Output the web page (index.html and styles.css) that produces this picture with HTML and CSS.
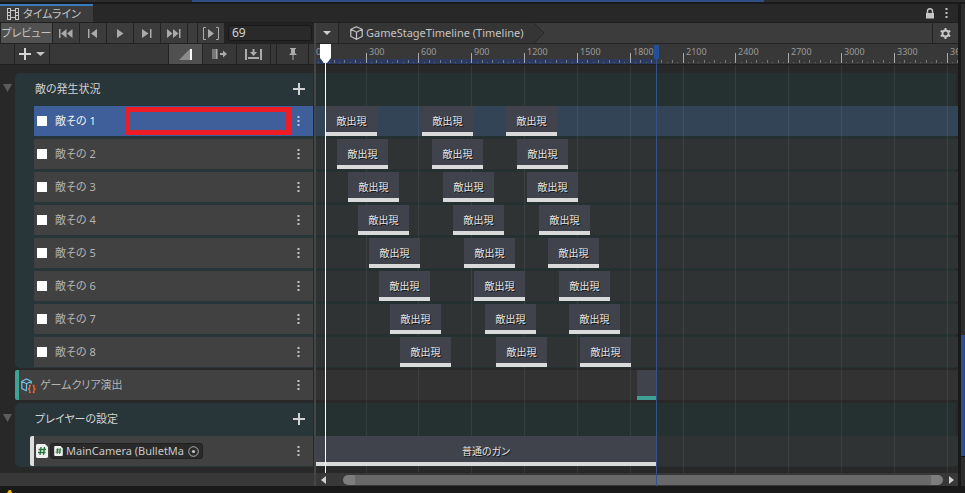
FILE: index.html
```html
<!DOCTYPE html>
<html lang="ja">
<head>
<meta charset="utf-8">
<title>タイムライン</title>
<link rel="stylesheet" href="styles.css">
</head>
<body>
<div class="above"><span class="above-fill"></span></div>
<div class="workspace">
  <main class="window">
    <header class="tabbar">
      <button class="tab" type="button">
        <svg width="12" height="12" viewBox="0 0 12 12" fill="none" stroke="#c8c8c8"><path d="M.5 .5v11M3.500 .5v11M8.500 .5v11M11.500 .5v11M0 .5h4M8 .5h4M0 4.500h4M8 4.500h4M0 7.500h4M8 7.500h4M0 11.500h4M8 11.500h4M3 2.500h6M3 9.500h6"/></svg>
        タイムライン
      </button>
      <div class="tab-tools">
        <button type="button" aria-label="ロック"><svg width="10" height="11" viewBox="0 0 10 11"><path d="M2.500 5V3a2.500 2.300 0 0 1 5 0v2" fill="none" stroke="#c4c4c4" stroke-width="1.500"/><path d="M1 5h8v5.500H1z" fill="#c4c4c4"/></svg></button>
        <button type="button" aria-label="メニュー"><svg class="dots" width="3" height="11" viewBox="0 0 3 11"><path d="M.5 0h2v2h-2zM.5 4h2v2h-2zM.5 8h2v2h-2z"/></svg></button>
      </div>
    </header>
    <div class="panes">
      <section class="left">
        <div class="toolbar">
          <button class="preview" type="button">プレビュー</button>
          <button class="play" type="button" aria-label="先頭"><svg width="14" height="9" viewBox="0 0 14 9"><path d="M0 0h1.500v9H0zM7.500 0v9L2 4.500zM13.500 0v9L8 4.500z"/></svg></button>
          <button class="play" type="button" aria-label="前へ"><svg width="10" height="9" viewBox="0 0 10 9"><path d="M0 0h1.500v9H0zM9 0v9L3 4.500z"/></svg></button>
          <button class="play" type="button" aria-label="再生"><svg width="8" height="9" viewBox="0 0 8 9"><path d="M1 0v9l6.500-4.500z"/></svg></button>
          <button class="play" type="button" aria-label="次へ"><svg width="10" height="9" viewBox="0 0 10 9"><path d="M8 0h1.500v9H8zM0 0v9l6.500-4.500z"/></svg></button>
          <button class="play" type="button" aria-label="末尾"><svg width="14" height="9" viewBox="0 0 14 9"><path d="M12 0h1.500v9H12zM0 0v9l5.500-4.500zM6 0v9l5.500-4.500z"/></svg></button>
          <span class="spacer"></span>
          <button class="play" type="button" aria-label="範囲再生"><svg width="16" height="13" viewBox="0 0 16 13"><path d="M5 2v9l6-4.500z"/><path d="M3 .5H.5v12H3M13 .5h2.500v12H13" fill="none" stroke="#aaa"/></svg></button>
          <input class="frame" type="text" value="69" aria-label="フレーム">
        </div>
        <div class="toolbar second">
          <span class="lead"></span>
          <button class="add" type="button" aria-label="追加"><svg width="26" height="12" viewBox="0 0 26 12"><path d="M0 5h5V0h2v5h5v2H7v5H5V7H0z" fill="#d4d4d4"/><path d="M17 4h9l-4.500 4z" fill="#c4c4c4"/></svg></button>
          <span class="fill"></span>
          <button class="mode on" type="button" aria-label="ミックス"><svg width="14" height="11" viewBox="0 0 14 11"><path d="M0 11L11 0v11z" fill="#8b8b8b"/><path d="M11 0h2v11h-2z" fill="#fff"/></svg></button>
          <button class="mode" type="button" aria-label="リップル"><svg width="15" height="10" viewBox="0 0 15 10"><path d="M0 0h4v10H0z" fill="#777"/><path d="M4 0h1.500v10H4zM8 4h3V1.500L15 5l-4 3.500V6H8z" fill="#aaa"/></svg></button>
          <button class="mode" type="button" aria-label="置換"><svg width="17" height="11" viewBox="0 0 17 11"><path d="M0 0h2v11H0zM15 0h2v11h-2zM7.500 0h2v3H12L8.500 7 5 3h2.500zM3 8h11v2H3z" fill="#aaa"/></svg></button>
          <span class="nub"></span>
          <button class="mode pin" type="button" aria-label="マーカー"><svg width="8" height="12" viewBox="0 0 8 12"><path d="M1 0h6v1H6v4l2 2H0l2-2V1H1zM3.500 7h1v5h-1z" fill="#aaa"/></svg></button>
          <span class="tail"></span>
        </div>
        <div class="tracks heads">
          <section class="group">
            <div class="group-head"><button class="fold" type="button" aria-label="折りたたむ"><svg width="9" height="8" viewBox="0 0 9 8"><path d="M0 0h9L4.500 8z"/></svg></button><h2>敵の発生状況</h2><button class="plus" type="button" aria-label="トラック追加"></button></div>
            <div id="enemies" class="rows"></div>
          </section>
          <div class="track timeline-track">
            <svg width="15" height="15" viewBox="0 0 15 15" fill="none"><path d="M6 13L.8 10.500V3.300L5.500 1l4.700 2.300v2.500M.8 3.300l4.700 2.400 4.700-2.400M5.500 5.700V12" stroke="#6fc3ea" stroke-width="1.200"/><path d="M9.800 7.500H8.600v2.500L7.500 11l1.100 1v2.500h1.200M11.700 7.500h1.200v2.500l1.100 1-1.100 1v2.500h-1.200" stroke="#ff5f2e" stroke-width="1.300"/></svg>
            <span class="name">ゲームクリア演出</span>
            <button class="more" type="button" aria-label="メニュー"><svg class="dots" width="3" height="11" viewBox="0 0 3 11"><path d="M.5 0h2v2h-2zM.5 4h2v2h-2zM.5 8h2v2h-2z"/></svg></button>
          </div>
          <section class="group">
            <div class="group-head"><button class="fold" type="button" aria-label="折りたたむ"><svg width="9" height="8" viewBox="0 0 9 8"><path d="M0 0h9L4.500 8z"/></svg></button><h2>プレイヤーの設定</h2><button class="plus" type="button" aria-label="トラック追加"></button></div>
            <div class="track camera">
              <svg width="12" height="14" viewBox="0 0 12 14"><path d="M1 0h8l3 3v10l-1 1H1l-1-1V1z" fill="#f0f0f0"/><path d="M5 3L4 11M8.500 3l-1 8M2.500 5.500h7.500M2 8.500h7.500" stroke="#27713b" stroke-width="1.300"/></svg>
              <button class="binding" type="button">
                <svg width="9" height="10" viewBox="0 0 12 14"><path d="M1 0h8l3 3v10l-1 1H1l-1-1V1z" fill="#f0f0f0"/><path d="M5 3L4 11M8.500 3l-1 8M2.500 5.500h7.500M2 8.500h7.500" stroke="#27713b" stroke-width="1.400"/></svg>
                <span class="object">MainCamera (BulletMa</span>
                <svg width="11" height="11" viewBox="0 0 11 11"><circle cx="5.500" cy="5.500" r="4.800" fill="none" stroke="#b0b0b0"/><circle cx="5.500" cy="5.500" r="1.600" fill="#c4c4c4"/></svg>
              </button>
              <button class="more" type="button" aria-label="メニュー"><svg class="dots" width="3" height="11" viewBox="0 0 3 11"><path d="M.5 0h2v2h-2zM.5 4h2v2h-2zM.5 8h2v2h-2z"/></svg></button>
            </div>
          </section>
        </div>
        <div class="footer"></div>
      </section>
      <section class="right">
        <div class="toolbar crumbs">
          <button class="drop" type="button" aria-label="選択"><svg width="8" height="4" viewBox="0 0 8 4"><path d="M0 0h8L4 4z" fill="#d0d0d0"/></svg></button>
          <button class="crumb" type="button">
            <svg width="13" height="14" viewBox="0 0 13 14" fill="none" stroke="#c4c4c4" stroke-width="1.200"><path d="M6.500 .7l5.700 2.600v7.200l-5.700 2.800-5.700-2.800V3.300zM.8 3.300l5.700 2.900 5.700-2.900M6.500 6.200v7"/></svg>
            GameStageTimeline (Timeline)
          </button>
          <svg class="chevron" width="11" height="20" viewBox="0 0 11 20"><path d="M0 0l10 10L0 20z" fill="#353535"/><path d="M0 0l10 10L0 20" fill="none" stroke="#272727"/></svg>
          <button class="gear" type="button" aria-label="設定"><svg width="11" height="11" viewBox="0 0 12 12"><circle cx="6" cy="6" r="3.300" fill="none" stroke="#c8c8c8" stroke-width="2"/><path d="M6 0v2.500M6 9.500V12M.8 3l2.200 1.300M9 7.700L11.200 9M.8 9L3 7.700M9 4.300L11.200 3" stroke="#c8c8c8" stroke-width="2.200"/></svg></button>
        </div>
        <div class="ruler" id="ruler"></div>
        <div class="tracks lanes">
          <section class="group">
            <div class="group-head"></div>
            <div id="enemy-lanes" class="rows"></div>
          </section>
          <div class="lane plain" data-clips="321,19" data-kind="clear"></div>
          <section class="group">
            <div class="group-head"></div>
            <div class="lane" data-clips="0,340" data-label="普通のガン"></div>
          </section>
          <svg class="grid" id="grid" width="100%" height="100%"></svg>
        </div>
        <div class="footer scroll">
          <svg width="5" height="8" viewBox="0 0 5 8"><path d="M5 0v8L0 4z"/></svg>
          <div class="thumb"></div>
          <svg width="5" height="8" viewBox="0 0 5 8"><path d="M0 0v8l5-4z"/></svg>
        </div>
        <span class="end-line"></span><span class="end-head"></span>
        <span class="playline"></span>
        <svg class="playhead" width="11" height="20" viewBox="0 0 11 20"><path d="M0 0h11v14l-4 5H4l-4-5z" fill="#fff"/></svg>
      </section>
    </div>
  </main>
  <aside class="neighbour"><span></span></aside>
</div>
<div class="below"><svg width="5" height="3" viewBox="0 0 5 3"><path d="M2 0h2l1 3H0z" fill="#f5b400"/></svg></div>
<script src="timeline.js"></script>
</body>
</html>
```
FILE: styles.css
```css
* { box-sizing: border-box; }

body {
  margin: 0;
  min-height: 100vh;
  display: flex;
  flex-direction: column;
  background: #191919;
  color: #c4c4c4;
  font-family: "Noto Sans", "Noto Sans CJK JP", sans-serif;
  font-size: 11px;
  line-height: 16px;
  font-feature-settings: "palt";
  overflow: hidden;
}

button {
  font: inherit;
  font-feature-settings: inherit;
  color: inherit;
  background: none;
  border: 0;
  padding: 0;
  display: flex;
  align-items: center;
  justify-content: center;
  white-space: nowrap;
}

svg { display: block; flex: none; }
.dots { fill: #c4c4c4; }

.above { display: flex; height: 4px; background: #2d2d2d; border-bottom: 2px solid #191919; padding-left: 192px; }
.above-fill { width: 74%; background: #2f4f84; }

.workspace { display: flex; }
.window { flex: 1; min-width: 0; background: #282828; }
.neighbour { width: 7px; background: #2d2d2d; border-left: 3px solid #191919; display: flex; align-items: flex-end; padding-bottom: 29px; }
.neighbour span { width: 100%; height: 122px; background: #2c5087; border-bottom: 1px solid #111; }
.below { height: 6px; padding: 4px 0 0 7px; }

.tabbar { display: flex; justify-content: space-between; height: 19px; border-bottom: 1px solid #1f1f1f; }
.tab { width: 93px; justify-content: flex-start; gap: 4px; padding-left: 7px; background: #3c3c3c; border-top: 2px solid #3a79bb; }
.tab-tools { display: flex; gap: 10px; padding-right: 10px; }

.panes { display: flex; }
.left { width: 316px; border-right: 2px solid #454545; }
.right { position: relative; flex: 1; min-width: 0; overflow: hidden; }

.toolbar { display: flex; gap: 1px; height: 21px; background: #232323; border-bottom: 1px solid #232323; }
.toolbar > * { background: #3c3c3c; }
.toolbar svg { fill: #aaa; }
.toolbar .preview { width: 52px; background: #515151; border-left: 1px solid #232323; }
.play { width: 26px; }
.spacer { width: 9px; }
.toolbar .frame {
  flex: 1;
  min-width: 0;
  height: 16px;
  margin: 2px 2px 2px 3px;
  padding: 0 3px;
  background: #2a2a2a;
  border: 1px solid #181818;
  border-radius: 3px;
  color: #d2d2d2;
  font: inherit;
  font-size: 12px;
}
.toolbar.second { border-bottom: 0; height: 20px; }
.toolbar.second > * { background: #383838; }
.lead { width: 14px; }
.toolbar .add { width: 34px; }
.fill { flex: 1; }
.mode { width: 33px; }
.pin { width: 31px; }
.toolbar.second .on { background: #505050; }
.nub { width: 5px; }
.tail { width: 5px; }

.tracks { display: flex; flex-direction: column; gap: 3px; padding: 8px 0 7px; border-top: 1px solid #202020; background: #282828; }
.heads { padding-left: 15px; padding-right: 1px; }
.group { padding-bottom: 1px; margin-bottom: -1px; background: #283539; border-radius: 5px 0 0 5px; }
.group-head { display: flex; align-items: center; height: 33px; padding-bottom: 2px; }
.group-head h2 { flex: 1; margin: 0; font-size: 11px; font-weight: 400; color: #d2d2d2; }
.fold { width: 15px; margin: -2px 20px 0 -15px; }
.fold svg { fill: #5c5c5c; }
.plus {
  width: 12px;
  height: 12px;
  margin-right: 8px;
  background: linear-gradient(#d2d2d2, #d2d2d2) center / 12px 2px no-repeat, linear-gradient(#d2d2d2, #d2d2d2) center / 2px 12px no-repeat;
}
.rows { display: flex; flex-direction: column; gap: 3px; }
.heads .rows { padding-left: 19px; }
.track { position: relative; display: flex; align-items: center; height: 30px; background: #414141; color: #b4b4b4; }
.swatch { width: 10px; height: 10px; margin: 0 8px 0 3px; background: #fff; }
.name { flex: 1; }
.more { width: 9px; margin-right: 10px; height: 20px; }
.selected { background: #3e5f99; color: #f0f0f0; }
.callout { position: absolute; inset: 1px 22px 1px 91px; border: 5px solid #ee1c24; }
.timeline-track { border-left: 4px solid #3ea294; padding-left: 2px; gap: 4px; border-radius: 2px 0 0 2px; }
.camera { margin-left: 15px; border-left: 4px solid #ddd; padding-left: 2px; gap: 2px; border-radius: 2px 0 0 2px; justify-content: flex-start; }
.binding { width: 153px; height: 16px; padding: 0 3px; gap: 3px; background: #2a2a2a; border: 1px solid #202020; border-radius: 3px; color: #c8c8c8; }
.object { flex: 1; text-align: left; }
.camera .more { margin-left: auto; }

.footer { height: 13px; background: #383838; }

.toolbar.crumbs { background: #3c3c3c; border-bottom: 1px solid #232323; gap: 0; }
.toolbar.crumbs .drop { width: 23px; background: #3a3a3a; border-right: 1px solid #232323; }
.toolbar.crumbs .crumb { background: #353535; padding: 0 10px 0 11px; gap: 3px; }
.toolbar.crumbs .crumb svg { fill: none; }
.toolbar.crumbs .gear { width: 26px; margin-left: auto; border-left: 1px solid #232323; }

.ruler { position: relative; height: 20px; background: #383838; color: #9a9a9a; font-size: 9px; line-height: 14px; overflow: hidden; }
.ruler .range { position: absolute; left: 0; top: 15px; width: 340px; height: 5px; background: #2b3a5e; }
.ruler svg { position: absolute; left: 0; top: 0; }
.ruler span { position: absolute; top: 1px; }

.lanes { position: relative; }
.lanes .group { background: #253030; border-radius: 0; margin-right: 2px; }
.lanes .rows, .group > .lane { margin-right: -2px; }
.lane { position: relative; height: 30px; background: #2f3333; }
.lane.selected { background: #334456; }
.lane.plain { background: #323232; }
.clip {
  position: absolute;
  z-index: 1;
  top: 0;
  height: 30px;
  padding-top: 3px;
  background: #40434b;
  border-bottom: 4px solid #dadada;
  color: #e4e4e4;
  font-size: 10px;
  line-height: 24px;
  text-align: center;
  text-shadow: 1px 1px 0 #151515;
}
.clip.clear { border-color: #3ea294; }
.grid { position: absolute; inset: 0; }

.scroll { display: flex; align-items: center; gap: 15px; padding: 0 4px 0 5px; }
.scroll svg { fill: #d0d0d0; }
.thumb { flex: 1; height: 10px; margin: 0 -9px 0 2px; background: #696969; border: solid #7d7d7d; border-width: 0 12px; border-radius: 5px; }

.playhead { position: absolute; z-index: 3; left: 4px; top: 21px; }
.playline { position: absolute; z-index: 2; left: 9px; top: 40px; bottom: 13px; width: 1px; background: #fff; }
.end-head { position: absolute; left: 338px; top: 22px; width: 5px; height: 14px; background: #24509b; }
.end-line { position: absolute; z-index: 2; left: 340px; top: 36px; bottom: 0; width: 1px; background: #34528c; }
```
FILE: timeline.js
```js
const starts = [
  [10, 106, 190], [21, 116, 201], [32, 127, 211], [42, 137, 223],
  [53, 148, 232], [63, 158, 243], [74, 169, 253], [84, 180, 264],
];
const dots = '<svg class="dots" width="3" height="11" viewBox="0 0 3 11"><path d="M.5 0h2v2h-2zM.5 4h2v2h-2zM.5 8h2v2h-2z"/></svg>';

function addClip(lane, left, width, label, kind) {
  const clip = document.createElement("div");
  clip.className = kind ? "clip " + kind : "clip";
  clip.style.left = left + "px";
  clip.style.width = width + "px";
  clip.textContent = label || "";
  lane.append(clip);
}

starts.forEach((row, i) => {
  const track = document.createElement("div");
  track.className = i === 0 ? "track selected" : "track";
  track.innerHTML = `<span class="swatch"></span><span class="name">敵その ${i + 1}</span>` +
    (i === 0 ? '<span class="callout"></span>' : "") +
    `<button class="more" type="button" aria-label="メニュー">${dots}</button>`;
  document.getElementById("enemies").append(track);

  const lane = document.createElement("div");
  lane.className = i === 0 ? "lane selected" : "lane";
  row.forEach((x) => addClip(lane, x, 51, "敵出現"));
  document.getElementById("enemy-lanes").append(lane);
});

document.querySelectorAll("[data-clips]").forEach((lane) => {
  const [x, w] = lane.dataset.clips.split(",").map(Number);
  addClip(lane, x, w, lane.dataset.label, lane.dataset.kind);
});

// Frame 0 sits just left of the visible area.
const at = (frame) => Math.floor(frame * 0.17607 - 2.72);
let ticks = "", lines = "", labels = "";
for (let f = 0; f <= 3660; f += 30) {
  const x = at(f);
  if (f % 300 === 0) {
    ticks += `<rect x="${x}" y="9" width="1" height="10" fill="#aaa"/>`;
    lines += `<rect x="${x}" y="0" width="1" height="100%" fill="#fff" fill-opacity=".07"/>`;
    labels += `<span style="left:${x + 3}px">${f}</span>`;
  } else if (f % 60 === 0) {
    ticks += `<rect x="${x}" y="16" width="1" height="3" fill="#777"/>`;
  } else {
    ticks += `<rect x="${x}" y="18" width="1" height="1" fill="#666"/>`;
  }
}
document.getElementById("ruler").innerHTML =
  `<div class="range"></div><svg width="100%" height="20">${ticks}</svg>${labels}`;
document.getElementById("grid").innerHTML = lines;
```
